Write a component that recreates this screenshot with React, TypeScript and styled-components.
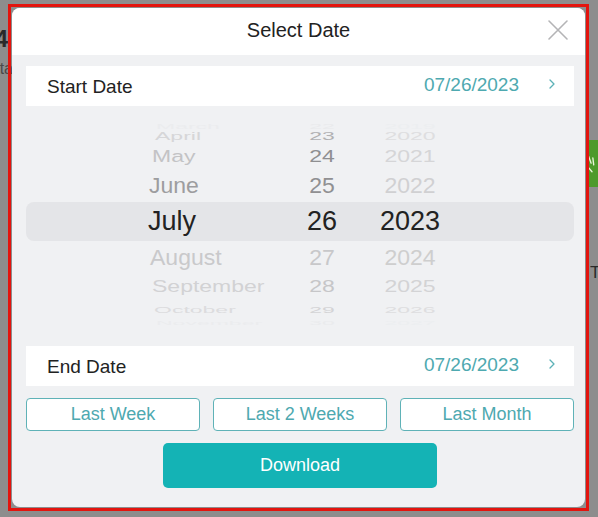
import React from 'react';
import styled, { createGlobalStyle } from 'styled-components';

const GlobalStyle = createGlobalStyle`
  html, body {
    margin: 0;
    padding: 0;
    background: #8d8d8d;
    font-family: 'Liberation Sans', Arial, sans-serif;
  }
  * { box-sizing: border-box; }
`;

type WheelRow = {
  month: string;
  day: string;
  year: string;
  height: number;
  scale: number;
  colors: [string, string, string];
  shift: number;
  selected?: boolean;
};

// rows of the wheel, squeezed towards the top and bottom like a drum
const rows: WheelRow[] = [
  { month: 'March', day: '22', year: '2019', height: 10, scale: 0.3, colors: ['#ebecee', '#e9eaec', '#eceef0'], shift: 8 },
  { month: 'April', day: '23', year: '2020', height: 18, scale: 0.5, colors: ['#d6d6d8', '#b0b0b2', '#dedee0'], shift: 7 },
  { month: 'May', day: '24', year: '2021', height: 26, scale: 0.72, colors: ['#c3c3c5', '#8f8f91', '#d5d5d7'], shift: 4 },
  { month: 'June', day: '25', year: '2022', height: 33, scale: 0.95, colors: ['#9d9d9f', '#909092', '#d0d0d2'], shift: 1 },
  { month: 'July', day: '26', year: '2023', height: 38, scale: 1, colors: ['#222', '#222', '#222'], shift: 0, selected: true },
  { month: 'August', day: '27', year: '2024', height: 33, scale: 0.95, colors: ['#c9c9cb', '#c8c8ca', '#cecece'], shift: 2 },
  { month: 'September', day: '28', year: '2025', height: 24, scale: 0.75, colors: ['#d2d2d4', '#c6c6c8', '#d3d3d5'], shift: 4 },
  { month: 'October', day: '29', year: '2026', height: 14, scale: 0.42, colors: ['#dcdcde', '#d4d4d6', '#dedee0'], shift: 6 },
  { month: 'November', day: '30', year: '2027', height: 10, scale: 0.25, colors: ['#ebecee', '#eaebed', '#eceef0'], shift: 8 },
];

const App: React.FC = () => {
  return (
    <>
      <GlobalStyle />
      <Page>
        <BackLeft>
          <BigNumber>124</BigNumber>
          <SubText>Data</SubText>
        </BackLeft>
        <BackRight>
          <GreenTile>
            <svg width="14" height="30" viewBox="0 0 14 30">
              <path d="M3 6 L6 14 M8 8 L9 16 M2 18 L7 24" stroke="#e8f3d8" strokeWidth="1.6" fill="none" strokeLinecap="round" />
            </svg>
          </GreenTile>
          <BackLetter>T</BackLetter>
        </BackRight>

        <Frame>
          <Modal>
            <Header>
              <Title>Select Date</Title>
              <CloseButton aria-label="close">
                <svg width="22" height="22" viewBox="0 0 22 22">
                  <path d="M2 2 L20 20 M20 2 L2 20" stroke="#b4b4b6" strokeWidth="1.6" strokeLinecap="round" />
                </svg>
              </CloseButton>
            </Header>
            <Body>
              <DateRow>
                <RowLabel>Start Date</RowLabel>
                <RowValue>
                  07/26/2023
                  <Chevron />
                </RowValue>
              </DateRow>

              <Wheel>
                {rows.map((r) => (
                  <WheelLine key={r.month} $height={r.height} $selected={!!r.selected}>
                    <MonthCell
                      $selected={!!r.selected}
                      style={{ color: r.colors[0], transform: `translateX(${r.shift}px) scaleY(${r.scale})` }}
                    >
                      {r.month}
                    </MonthCell>
                    <DayCell
                      $selected={!!r.selected}
                      style={{ color: r.colors[1], transform: `scaleY(${r.scale})` }}
                    >
                      {r.day}
                    </DayCell>
                    <YearCell
                      $selected={!!r.selected}
                      style={{ color: r.colors[2], transform: `scaleY(${r.scale})` }}
                    >
                      {r.year}
                    </YearCell>
                  </WheelLine>
                ))}
              </Wheel>

              <DateRow>
                <RowLabel>End Date</RowLabel>
                <RowValue>
                  07/26/2023
                  <Chevron />
                </RowValue>
              </DateRow>

              <QuickRow>
                <QuickButton>Last Week</QuickButton>
                <QuickButton>Last 2 Weeks</QuickButton>
                <QuickButton>Last Month</QuickButton>
              </QuickRow>

              <DownloadButton>Download</DownloadButton>
            </Body>
          </Modal>
        </Frame>
      </Page>
    </>
  );
};

const Chevron: React.FC = () => (
  <ChevronIcon width="8" height="12" viewBox="0 0 8 12">
    <path d="M2 2 L6 6 L2 10" stroke="#5cb1b7" strokeWidth="1.3" fill="none" strokeLinecap="round" strokeLinejoin="round" />
  </ChevronIcon>
);

const Page = styled.div`
  position: relative;
  width: 598px;
  height: 517px;
  overflow: hidden;
  display: flex;
  justify-content: space-between;
`;

const BackLeft = styled.div`
  margin-left: -44px;
  width: 52px;
  padding-top: 25px;
  display: flex;
  flex-direction: column;
  align-items: flex-end;
  gap: 7px;
`;

const BigNumber = styled.div`
  font-size: 24px;
  font-weight: 700;
  color: #2a2a2a;
`;

const SubText = styled.div`
  font-size: 16px;
  color: #4a4a4a;
  margin-right: -5px;
`;

const BackRight = styled.div`
  padding-top: 140px;
  width: 12px;
  display: flex;
  flex-direction: column;
  align-items: flex-end;
`;

const GreenTile = styled.div`
  width: 12px;
  height: 47px;
  background: #4e9a2c;
  display: flex;
  align-items: center;
  justify-content: flex-start;
  overflow: hidden;
`;

const BackLetter = styled.div`
  margin-top: 76px;
  width: 8px;
  font-size: 17px;
  color: #2a2a2a;
  overflow: hidden;
`;

const Frame = styled.div`
  position: absolute;
  left: 8px;
  top: 4px;
  width: 581px;
  height: 507px;
  border: 3px solid #e3140e;
  padding: 1px;
`;

const Modal = styled.div`
  height: 100%;
  background: #f0f1f3;
  border-radius: 8px;
  overflow: hidden;
  display: flex;
  flex-direction: column;
`;

const Header = styled.div`
  height: 47px;
  background: #ffffff;
  display: flex;
  align-items: center;
  justify-content: center;
  position: relative;
  flex-shrink: 0;
`;

const Title = styled.div`
  font-size: 20px;
  color: #222222;
  margin-top: -2px;
`;

const CloseButton = styled.button`
  position: absolute;
  right: 16px;
  top: 11px;
  background: none;
  border: none;
  padding: 0;
  width: 22px;
  height: 22px;
  cursor: pointer;
`;

const Body = styled.div`
  padding: 11px 11px 0 14px;
  display: flex;
  flex-direction: column;
`;

const DateRow = styled.div`
  height: 40px;
  background: #ffffff;
  display: flex;
  align-items: center;
  justify-content: space-between;
  padding: 0 18px 0 21px;
`;

const RowLabel = styled.div`
  font-size: 19px;
  color: #222222;
  margin-top: 1px;
`;

const RowValue = styled.div`
  font-size: 19px;
  color: #4ea9b0;
  display: flex;
  align-items: center;
  gap: 29px;
  margin-top: -2px;
`;

const ChevronIcon = styled.svg`
  margin-top: -2px;
`;

const Wheel = styled.div`
  height: 240px;
  padding-top: 9px;
  display: flex;
  flex-direction: column;
  overflow: hidden;
`;

const WheelLine = styled.div<{ $height: number; $selected: boolean }>`
  height: ${(p) => (p.$selected ? 39 : p.$height)}px;
  display: grid;
  grid-template-columns: 150px 48px 128px;
  padding-left: 122px;
  align-items: center;
  border-radius: 8px;
  background: ${(p) => (p.$selected ? '#e4e5e8' : 'transparent')};
`;

const Cell = styled.div<{ $selected: boolean }>`
  font-size: ${(p) => (p.$selected ? 27 : 23)}px;
  line-height: 1;
  white-space: nowrap;
`;

const MonthCell = styled(Cell)`
  text-align: left;
  transform-origin: left center;
`;

const DayCell = styled(Cell)`
  text-align: center;
`;

const YearCell = styled(Cell)`
  text-align: center;
`;

const QuickRow = styled.div`
  margin-top: 12px;
  display: grid;
  grid-template-columns: repeat(3, 1fr);
  gap: 13px;
`;

const QuickButton = styled.button`
  height: 33px;
  background: #ffffff;
  border: 1px solid #5fb2b7;
  border-radius: 4px;
  font-family: 'Liberation Sans', Arial, sans-serif;
  font-size: 18px;
  color: #4ea9b0;
  padding: 0;
  cursor: pointer;
`;

const DownloadButton = styled.button`
  margin: 12px auto 0;
  width: 274px;
  height: 45px;
  background: #14b3b5;
  border: none;
  border-radius: 5px;
  font-family: 'Liberation Sans', Arial, sans-serif;
  font-size: 18px;
  color: #ffffff;
  cursor: pointer;
`;

export default App;
